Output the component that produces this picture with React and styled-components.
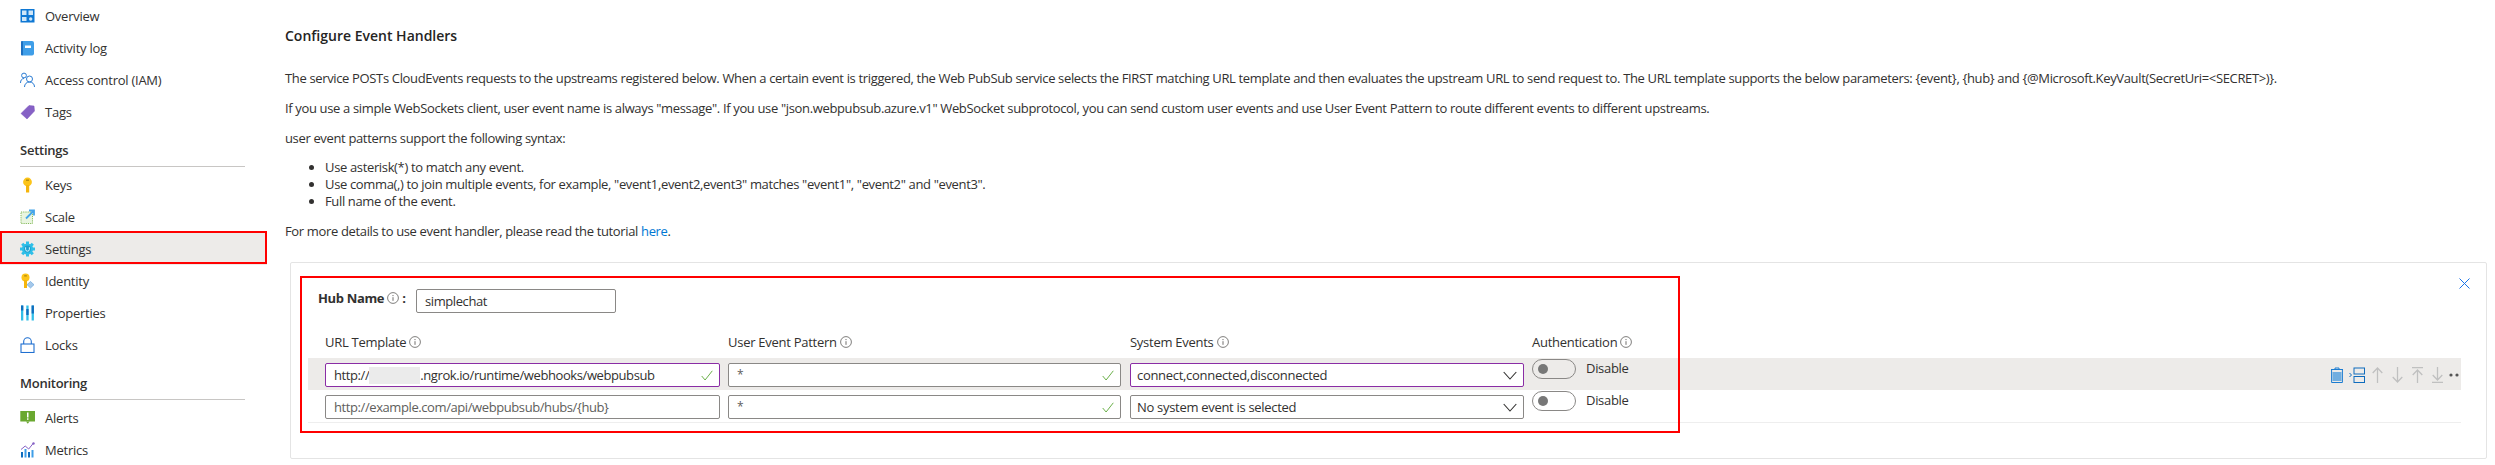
import React from "react";
import styled, { createGlobalStyle } from "styled-components";

const Global = createGlobalStyle`
  html, body { margin: 0; padding: 0; background: #fff; }
  body { font-family: "Open Sans", "Liberation Sans", sans-serif; font-size: 13px; color: #323130; }
`;

const Page = styled.div`
  display: flex;
  width: 2495px;
  height: 465px;
  overflow: hidden;
  background: #fff;
`;
const Sidebar = styled.nav`
  width: 267px;
  flex: none;
`;
const NavRow = styled.div`
  position: relative;
  display: flex;
  align-items: center;
  height: 32px;
  padding-left: 20px;
  gap: 10px;
  font-size: 13px;
  letter-spacing: -0.25px;
  color: #323130;
  background: ${(p) => (p.$active ? "#edebe9" : "transparent")};
  ${(p) =>
    p.$active &&
    `&::after { content: ""; position: absolute; left: 0; right: 0; top: -2px; bottom: 1px; border: 2px solid #f00; }`}
`;
const NavIcon = styled.svg`
  width: 15px;
  height: 16px;
  flex: none;
`;
const NavSection = styled.div`
  height: 39px;
  margin: 0 22px 2px 20px;
  box-sizing: border-box;
  padding-top: 13px;
  border-bottom: 1px solid #c8c6c4;
  font-size: 13px;
  font-weight: 600;
  letter-spacing: -0.25px;
  line-height: 18px;
`;
const Main = styled.main`
  flex: 1;
  min-width: 0;
  padding-left: 18px;
`;
const Title = styled.h2`
  margin: 0;
  padding-top: 27px;
  font-size: 14px;
  font-weight: 600;
  line-height: 18px;
  letter-spacing: 0;
  color: #252423;
`;
const Para = styled.p`
  margin: ${(p) => p.$top || 12}px 0 0;
  font-size: 13px;
  line-height: 18px;
  letter-spacing: -0.35px;
  white-space: nowrap;
`;
const Bullets = styled.ul`
  margin: 12px 0 0;
  padding-left: 40px;
  font-size: 13px;
  line-height: 17px;
  letter-spacing: -0.35px;
`;
const Link = styled.a`
  color: #0078d4;
`;
const Card = styled.section`
  position: relative;
  width: 2197px;
  height: 197px;
  margin: 22px 0 0 5px;
  box-sizing: border-box;
  border: 1px solid #e4e4e4;
  border-radius: 2px;
`;
const RedBox = styled.div`
  position: absolute;
  left: 9px;
  top: 13px;
  width: 1380px;
  height: 157px;
  box-sizing: border-box;
  border: 2px solid #f00;
  pointer-events: none;
`;
const CloseBtn = styled.svg`
  position: absolute;
  right: 16px;
  top: 15px;
  width: 11px;
  height: 11px;
`;
const HubRow = styled.div`
  display: flex;
  align-items: flex-start;
  padding: 26px 0 0 27px;
  height: 53px;
  box-sizing: border-box;
`;
const HubLabel = styled.label`
  display: flex;
  align-items: center;
  gap: 3px;
  font-weight: 700;
  letter-spacing: -0.35px;
  line-height: 18px;
  width: 98px;
`;
const Field = styled.div`
  position: relative;
  box-sizing: border-box;
  display: flex;
  align-items: center;
  width: ${(p) => p.$w}px;
  height: ${(p) => p.$h || 24}px;
  padding-left: ${(p) => p.$pad || 8}px;
  background: #fff;
  border: 1px solid ${(p) => (p.$focus ? "#8a2da5" : "#8a8886")};
  border-radius: 2px;
  font-size: 13px;
  letter-spacing: ${(p) => (p.$pad ? "-0.3px" : "-0.41px")};
  color: ${(p) => (p.$placeholder ? "#605e5c" : "#323130")};
  white-space: nowrap;
`;
const Star = styled.span`
  font-size: 12px;
  color: #605e5c;
  margin-top: -2px;
`;
const Redacted = styled.span`
  display: inline-block;
  width: 51px;
  height: 17px;
  background: #ebebeb;
`;
const Check = styled.svg`
  position: absolute;
  right: 6px;
  top: 6px;
  width: 12px;
  height: 11px;
`;
const Chevron = styled.svg`
  position: absolute;
  right: 6px;
  top: 7px;
  width: 14px;
  height: 9px;
`;
const Columns = styled.div`
  display: grid;
  grid-template-columns: 395px 394px 394px 1fr;
  column-gap: 8px;
  padding-left: 34px;
  height: 25px;
  align-items: start;
  margin-top: 17px;
`;
const ColLabel = styled.div`
  display: flex;
  align-items: center;
  gap: 3px;
  line-height: 18px;
  letter-spacing: -0.27px;
`;
const Table = styled.div`
  margin-left: 17px;
  width: 2153px;
  border-bottom: 1px solid #eee;
`;
const Row = styled.div`
  display: grid;
  grid-template-columns: 395px 394px 394px 1fr;
  column-gap: 8px;
  padding-left: 17px;
  height: 32px;
  box-sizing: border-box;
  padding-top: 5px;
  background: ${(p) => (p.$hover ? "#edebe9" : "transparent")};
`;
const AuthCell = styled.div`
  display: flex;
  align-items: flex-start;
  gap: 10px;
  margin-top: -4px;
`;
const Toggle = styled.span`
  box-sizing: border-box;
  display: flex;
  align-items: center;
  width: 44px;
  height: 20px;
  padding-left: 5px;
  border: 1px solid #8a8886;
  border-radius: 10px;
  background: ${(p) => (p.$hover ? "#edebe9" : "#fff")};
  &::before {
    content: "";
    width: 10px;
    height: 10px;
    border-radius: 50%;
    background: #777;
  }
`;
const ToggleText = styled.span`
  line-height: 18px;
  letter-spacing: -0.3px;
`;
const HoverRowWrap = styled.div`
  position: relative;
`;
const Actions = styled.div`
  position: absolute;
  right: 2px;
  top: 9px;
  height: 16px;
  display: flex;
  align-items: center;
`;
const ActionIcon = styled.svg`
  width: ${(p) => p.$w || 11}px;
  height: 16px;
  flex: none;
  margin-left: ${(p) => p.$ml || 0}px;
`;

const Info = () => (
  <svg width="12" height="12" viewBox="0 0 12 12" fill="none">
    <circle cx="6" cy="6" r="5.4" stroke="#605e5c" strokeWidth="0.8" />
    <circle cx="6" cy="3.6" r="0.6" fill="#605e5c" />
    <path d="M6 5.2v3.6" stroke="#605e5c" strokeWidth="0.9" />
  </svg>
);
const Ok = () => (
  <Check viewBox="0 0 12 11" fill="none">
    <path d="M0.7 6l3.4 4L11.3 0.8" stroke="#6bb04a" strokeWidth="1" />
  </Check>
);
const Down = () => (
  <Chevron viewBox="0 0 14 9" fill="none">
    <path d="M0.7 1l6.3 7 6.3-7" stroke="#323130" strokeWidth="1.1" />
  </Chevron>
);

const icons = {
  overview: (
    <>
      <rect x="0.5" y="1" width="14" height="13.5" fill="#0f78d4" />
      <path d="M2 2.5h4.5v4.5H2zM8.5 2.5h4.5v4.5H8.5zM2 9h4.5v4H2z" fill="#cfe6f8" />
      <circle cx="10.7" cy="11" r="1.7" fill="#cfe6f8" />
    </>
  ),
  log: (
    <>
      <rect x="1" y="1" width="13" height="14.5" rx="2" fill="#3f9ee8" />
      <rect x="1" y="1" width="2" height="14.5" rx="1" fill="#1d6fc0" />
      <rect x="5" y="5.5" width="6" height="2.5" fill="#fff" />
    </>
  ),
  iam: (
    <g fill="none" stroke="#2b7cd3" strokeWidth="1">
      <circle cx="4" cy="3.5" r="2.4" />
      <path d="M0.5 11c0-3 1.5-4.5 3.5-4.5" />
      <circle cx="9.5" cy="7" r="3" />
      <path d="M4.5 15c0-3 2-5 5-5s5 2 5 5" />
    </g>
  ),
  tags: (
    <path d="M9 1.5l5 0.5 0.5 5-7.5 8-6-5.5z" fill="#8661c5" stroke="#7a52bd" strokeWidth="0.5" />
  ),
  keys: (
    <>
      <circle cx="7.5" cy="5" r="4.4" fill="#fcc419" />
      <rect x="6" y="8" width="3.2" height="7.5" fill="#f5b50c" />
      <rect x="6" y="2.5" width="3" height="1.4" fill="#b28a0c" />
    </>
  ),
  scale: (
    <>
      <rect x="1" y="3" width="11.5" height="11.5" fill="#e9f5e0" stroke="#86bb5c" strokeDasharray="1.2 1" />
      <path d="M6 9.5L13.5 2M9 1.5h5v5" fill="none" stroke="#45a5ea" strokeWidth="1.8" />
    </>
  ),
  settings: (
    <>
      <g fill="#2fbfe8">
        <circle cx="7.5" cy="8" r="5.6" />
        <rect x="6" y="0.5" width="3" height="15" />
        <rect x="6" y="0.5" width="3" height="15" transform="rotate(45 7.5 8)" />
        <rect x="6" y="0.5" width="3" height="15" transform="rotate(90 7.5 8)" />
        <rect x="6" y="0.5" width="3" height="15" transform="rotate(135 7.5 8)" />
      </g>
      <circle cx="7.5" cy="8" r="3.4" fill="#1e9fd0" />
      <path d="M5.6 6.3v2a1.9 1.9 0 0 0 3.8 0v-2" fill="none" stroke="#d9f5fc" strokeWidth="1" />
    </>
  ),
  identity: (
    <>
      <circle cx="5.5" cy="4.5" r="4" fill="#fcc419" />
      <rect x="4" y="7" width="3" height="8" fill="#f5b50c" />
      <rect x="4.2" y="2.2" width="2.6" height="1.3" fill="#b28a0c" />
      <path d="M10.5 8.5l3.5 3.2-3.5 3.3-3.5-3.3z" fill="#a5c8ea" stroke="#5ea0d8" strokeWidth="0.6" />
    </>
  ),
  props: (
    <>
      <rect x="1" y="0.5" width="2.3" height="15" fill="#32bfe8" />
      <rect x="1" y="0.5" width="2.3" height="5" fill="#0f6cbd" />
      <rect x="6.3" y="0.5" width="2.3" height="15" fill="#32bfe8" />
      <rect x="6.3" y="4" width="2.3" height="6" fill="#0f6cbd" />
      <rect x="11.6" y="0.5" width="2.3" height="15" fill="#32bfe8" />
      <rect x="11.6" y="0.5" width="2.3" height="8" fill="#0f6cbd" />
    </>
  ),
  locks: (
    <g fill="none" stroke="#1f6fd0" strokeWidth="1.1">
      <rect x="1" y="7" width="13" height="8.5" fill="#fff" />
      <path d="M3.7 7V4.5a3.8 3.8 0 0 1 7.6 0V7" />
    </g>
  ),
  alerts: (
    <>
      <rect x="0.3" y="1" width="14.7" height="10.5" fill="#6aa830" />
      <path d="M6 11.5h3.5l-1.7 2.2z" fill="#6aa830" />
      <rect x="7" y="2.5" width="1.5" height="5" fill="#fff" />
      <rect x="7" y="8.3" width="1.5" height="1.5" fill="#fff" />
    </>
  ),
  metrics: (
    <>
      <rect x="1" y="10" width="2" height="5.5" fill="#0f6cbd" />
      <rect x="4.5" y="7" width="2" height="8.5" fill="#3f9ee8" />
      <rect x="8" y="10" width="2" height="5.5" fill="#0f6cbd" />
      <rect x="11.5" y="8" width="2" height="7.5" fill="#3f9ee8" />
      <path d="M1 7.5l4.2-3.5 3.5 3 4.8-6" fill="none" stroke="#8661c5" strokeWidth="1" />
      <circle cx="13.5" cy="1.5" r="1.2" fill="#8661c5" />
    </>
  ),
};

const Item = ({ icon, children, active }) => (
  <NavRow $active={active}>
    <NavIcon viewBox="0 0 15 16">{icons[icon]}</NavIcon>
    {children}
  </NavRow>
);

const Arrow = ({ d, ml }) => (
  <ActionIcon $ml={ml} viewBox="0 0 11 16" fill="none">
    <path d={d} stroke="#c0c0c0" strokeWidth="1.3" />
  </ActionIcon>
);

export default function App() {
  return (
    <Page>
      <Global />
      <Sidebar>
        <Item icon="overview">Overview</Item>
        <Item icon="log">Activity log</Item>
        <Item icon="iam">Access control (IAM)</Item>
        <Item icon="tags">Tags</Item>
        <NavSection>Settings</NavSection>
        <Item icon="keys">Keys</Item>
        <Item icon="scale">Scale</Item>
        <Item icon="settings" active>Settings</Item>
        <Item icon="identity">Identity</Item>
        <Item icon="props">Properties</Item>
        <Item icon="locks">Locks</Item>
        <NavSection>Monitoring</NavSection>
        <Item icon="alerts">Alerts</Item>
        <Item icon="metrics">Metrics</Item>
      </Sidebar>
      <Main>
        <Title>Configure Event Handlers</Title>
        <Para $top={24}>
          The service POSTs CloudEvents requests to the upstreams registered below. When a certain event is triggered, the Web PubSub service selects the FIRST matching URL template and then evaluates the upstream URL to send request to. The URL template supports the below parameters: {"{event}"}, {"{hub}"} and {"{@Microsoft.KeyVault(SecretUri=<SECRET>)}"}.
        </Para>
        <Para>
          If you use a simple WebSockets client, user event name is always "message". If you use "json.webpubsub.azure.v1" WebSocket subprotocol, you can send custom user events and use User Event Pattern to route different events to different upstreams.
        </Para>
        <Para>user event patterns support the following syntax:</Para>
        <Bullets>
          <li>Use asterisk(*) to match any event.</li>
          <li>Use comma(,) to join multiple events, for example, "event1,event2,event3" matches "event1", "event2" and "event3".</li>
          <li>Full name of the event.</li>
        </Bullets>
        <Para>
          For more details to use event handler, please read the tutorial <Link>here</Link>.
        </Para>
        <Card>
          <CloseBtn viewBox="0 0 11 11" fill="none">
            <path d="M0.5 0.5l10 10M10.5 0.5l-10 10" stroke="#1a73e8" strokeWidth="1" />
          </CloseBtn>
          <HubRow>
            <HubLabel>
              Hub Name <Info /> :
            </HubLabel>
            <Field $w={200}>simplechat</Field>
          </HubRow>
          <Columns>
            <ColLabel>URL Template <Info /></ColLabel>
            <ColLabel>User Event Pattern <Info /></ColLabel>
            <ColLabel>System Events <Info /></ColLabel>
            <ColLabel>Authentication <Info /></ColLabel>
          </Columns>
          <Table>
            <HoverRowWrap>
              <Row $hover>
                <Field $w={395} $focus>
                  http://<Redacted />.ngrok.io/runtime/webhooks/webpubsub
                  <Ok />
                </Field>
                <Field $w={393}><Star>*</Star><Ok /></Field>
                <Field $w={394} $focus $pad={6}>connect,connected,disconnected<Down /></Field>
                <AuthCell>
                  <Toggle $hover />
                  <ToggleText>Disable</ToggleText>
                </AuthCell>
              </Row>
              <Actions>
                <ActionIcon $w={14} viewBox="0 0 14 16" fill="none">
                  <rect x="2.5" y="5" width="9" height="9" fill="#71aee0" />
                  <path d="M1 2.5h12M1.6 2.5v13h10.8v-13M5 2.5V1h4v1.5" stroke="#1c7cd0" strokeWidth="1" />
                </ActionIcon>
                <ActionIcon $ml={5} $w={16} viewBox="0 0 16 16" fill="none">
                  <path d="M0.5 6l2 2-2 2" stroke="#0f6cbd" strokeWidth="1" />
                  <rect x="5" y="1" width="10.5" height="6" stroke="#0f6cbd" strokeWidth="1" />
                  <rect x="5" y="9.5" width="10.5" height="6" stroke="#0f6cbd" strokeWidth="1" />
                </ActionIcon>
                <Arrow ml={7} d="M5.5 16V1M0.7 6l4.8-5 4.8 5" />
                <Arrow ml={9} d="M5.5 0v15M0.7 10l4.8 5 4.8-5" />
                <Arrow ml={9} d="M0 0.7h11M5.5 16V3M0.7 8l4.8-5 4.8 5" />
                <Arrow ml={9} d="M0 15.3h11M5.5 0v13M0.7 8l4.8 5 4.8-5" />
                <ActionIcon $ml={6} $w={10} viewBox="0 0 10 16">
                  <circle cx="2" cy="8" r="1.6" fill="#555" />
                  <circle cx="8" cy="8" r="1.6" fill="#555" />
                </ActionIcon>
              </Actions>
            </HoverRowWrap>
            <Row>
              <Field $w={395} $placeholder>http://example.com/api/webpubsub/hubs/{"{hub}"}</Field>
              <Field $w={393}><Star>*</Star><Ok /></Field>
              <Field $w={394} $pad={6}>No system event is selected<Down /></Field>
              <AuthCell>
                <Toggle />
                <ToggleText>Disable</ToggleText>
              </AuthCell>
            </Row>
          </Table>
          <RedBox />
        </Card>
      </Main>
    </Page>
  );
}
